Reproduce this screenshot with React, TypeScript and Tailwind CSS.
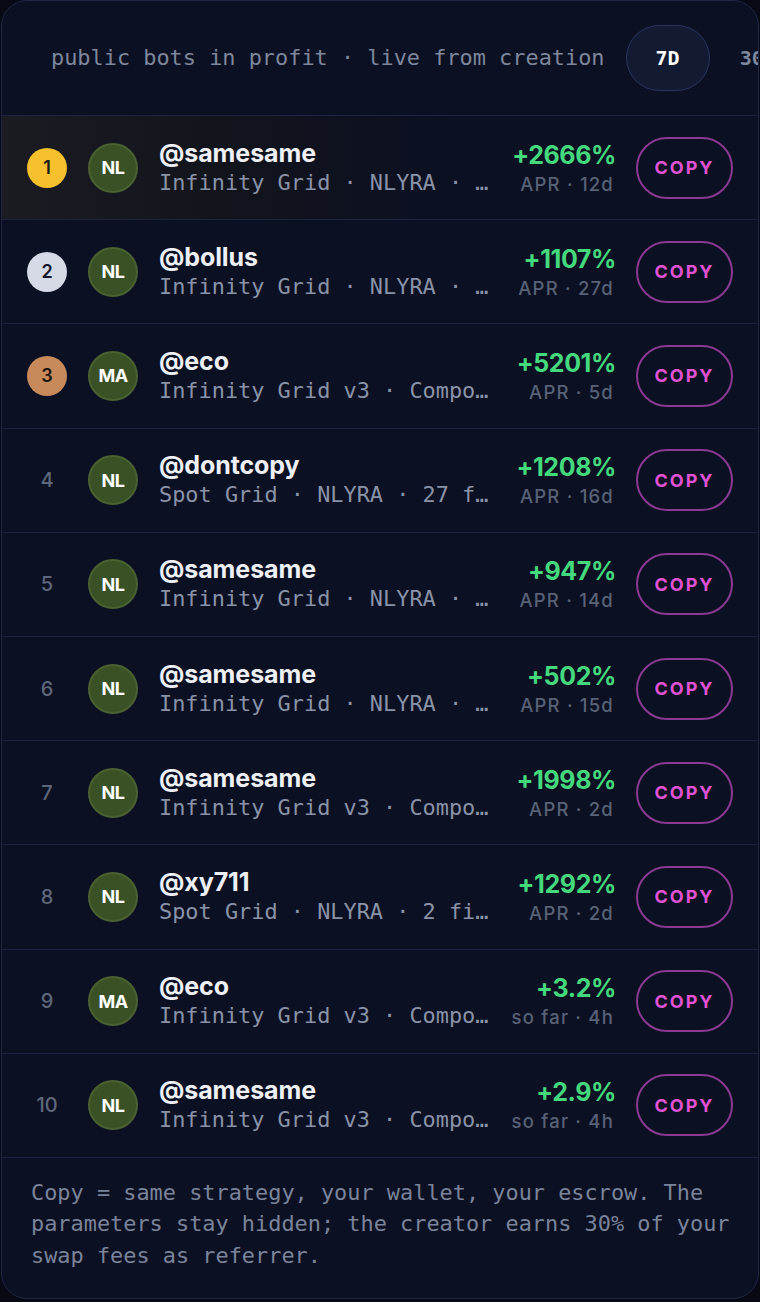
const mono = { fontFamily: '"DejaVu Sans Mono", "Liberation Mono", monospace' };

type Bot = {
  rank: number;
  avatar: string;
  name: string;
  desc: string;
  pct: string;
  meta: string;
};

const bots: Bot[] = [
  { rank: 1, avatar: 'NL', name: '@samesame', desc: 'Infinity Grid · NLYRA · 12 fills', pct: '+2666%', meta: 'APR · 12d' },
  { rank: 2, avatar: 'NL', name: '@bollus', desc: 'Infinity Grid · NLYRA · 27 fills', pct: '+1107%', meta: 'APR · 27d' },
  { rank: 3, avatar: 'MA', name: '@eco', desc: 'Infinity Grid v3 · Compounding', pct: '+5201%', meta: 'APR · 5d' },
  { rank: 4, avatar: 'NL', name: '@dontcopy', desc: 'Spot Grid · NLYRA · 27 fills', pct: '+1208%', meta: 'APR · 16d' },
  { rank: 5, avatar: 'NL', name: '@samesame', desc: 'Infinity Grid · NLYRA · 14 fills', pct: '+947%', meta: 'APR · 14d' },
  { rank: 6, avatar: 'NL', name: '@samesame', desc: 'Infinity Grid · NLYRA · 15 fills', pct: '+502%', meta: 'APR · 15d' },
  { rank: 7, avatar: 'NL', name: '@samesame', desc: 'Infinity Grid v3 · Compounding', pct: '+1998%', meta: 'APR · 2d' },
  { rank: 8, avatar: 'NL', name: '@xy711', desc: 'Spot Grid · NLYRA · 2 fills', pct: '+1292%', meta: 'APR · 2d' },
  { rank: 9, avatar: 'MA', name: '@eco', desc: 'Infinity Grid v3 · Compounding', pct: '+3.2%', meta: 'so far · 4h' },
  { rank: 10, avatar: 'NL', name: '@samesame', desc: 'Infinity Grid v3 · Compounding', pct: '+2.9%', meta: 'so far · 4h' },
];

function Rank({ n }: { n: number }) {
  if (n === 1)
    return <div className="w-10 h-10 rounded-full bg-[#f6c12c] text-[#1b1a14] flex items-center justify-center text-[18px] font-semibold shrink-0">1</div>;
  if (n === 2)
    return <div className="w-10 h-10 rounded-full bg-[#d6d9e6] text-[#14182a] flex items-center justify-center text-[18px] font-semibold shrink-0">2</div>;
  if (n === 3)
    return <div className="w-10 h-10 rounded-full bg-[#c98a5b] text-[#1b140f] flex items-center justify-center text-[18px] font-semibold shrink-0">3</div>;
  return <div className="w-10 h-10 flex items-center justify-center text-[20px] font-medium text-[#5f677b] shrink-0">{n}</div>;
}

function Row({ bot }: { bot: Bot }) {
  return (
    <div
      className={`h-[104.2px] border-t border-[#1b2340] flex items-center pl-[25px] pr-[25px] ${
        bot.rank === 1 ? 'bg-gradient-to-r from-[#1b1c22] via-[#12141c] via-30% to-transparent to-60%' : ''
      }`}
    >
      <Rank n={bot.rank} />
      <div className="ml-[21px] w-[50px] h-[50px] rounded-full bg-[#3a5125] border-2 border-[#4a6232] flex items-center justify-center text-white text-[18px] font-bold tracking-[-0.5px] shrink-0">
        {bot.avatar}
      </div>
      <div className="ml-[21px] flex-1 min-w-0 flex flex-col">
        <div className="text-[25px] leading-[30px] font-bold text-[#eef0f6] tracking-[-0.1px]">{bot.name}</div>
        <div className="text-[21.9px] leading-[30px] text-[#8a93a7] truncate" style={mono}>
          {bot.desc}
        </div>
      </div>
      <div className="ml-[12px] w-[112px] shrink-0 flex flex-col items-end">
        <div className="text-[25px] leading-[32px] font-bold text-[#45d97e] tracking-[-0.4px]">{bot.pct}</div>
        <div className="text-[18.5px] leading-[26px] font-medium text-[#596276] tracking-[1.2px] mr-[2px] whitespace-nowrap">{bot.meta}</div>
      </div>
      <button className="ml-[20px] w-[97px] h-[62px] rounded-full border-2 border-[#8a3a92] text-[#e052d4] text-[18px] font-bold tracking-[2px] shrink-0 flex items-center justify-center">
        COPY
      </button>
    </div>
  );
}

export default function App() {
  return (
    <div className="min-h-[1302px] bg-[#070a14] px-px" style={{ fontFamily: 'Inter, "Noto Sans", sans-serif' }}>
      <div className="rounded-[26px] border border-[#1f2744] bg-[#0b1022] overflow-hidden">
        {/* header / period tabs */}
        <div className="h-[114px] flex items-center pl-[49px] overflow-hidden whitespace-nowrap">
          <span className="text-[21.9px] text-[#7e879c] shrink-0" style={mono}>
            public bots in profit · live from creation
          </span>
          <button className="ml-[21px] h-[66px] px-[29px] rounded-full bg-[#131b32] border border-[#2b3660] text-white text-[20px] font-bold shrink-0" style={mono}>
            7D
          </button>
          <button className="h-[66px] px-[30px] rounded-full text-[#7e879c] text-[20px] font-bold shrink-0" style={mono}>
            30D
          </button>
        </div>

        {bots.map((b) => (
          <Row key={b.rank} bot={b} />
        ))}

        <div className="border-t border-[#1b2340] pl-[29px] pr-[20px] pt-[19px] pb-[27px] text-[21.9px] leading-[31.5px] text-[#7b849a]" style={mono}>
          Copy = same strategy, your wallet, your escrow. The parameters stay hidden; the creator earns 30% of your swap fees as referrer.
        </div>
      </div>
    </div>
  );
}
